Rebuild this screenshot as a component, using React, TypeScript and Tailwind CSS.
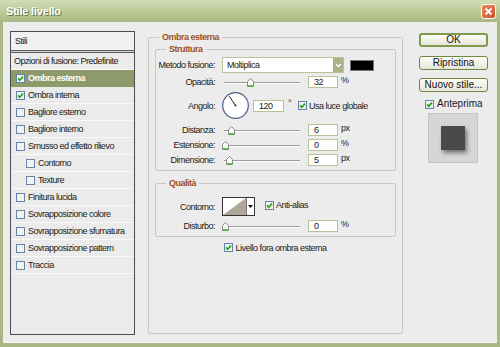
import React from "react";

const styleRows = [
  { label: "Ombra esterna", checked: true, selected: true },
  { label: "Ombra interna", checked: true },
  { label: "Bagliore esterno" },
  { label: "Bagliore interno" },
  { label: "Smusso ed effetto rilievo" },
  { label: "Contorno", indent: true },
  { label: "Texture", indent: true },
  { label: "Finitura lucida" },
  { label: "Sovrapposizione colore" },
  { label: "Sovrapposizione sfumatura" },
  { label: "Sovrapposizione pattern" },
  { label: "Traccia" },
];

const Check = ({ checked = false }: { checked?: boolean }) => (
  <svg width="9" height="9" viewBox="0 0 9 9" className="shrink-0">
    <rect x="0.5" y="0.5" width="8" height="8" fill="#f3f3ec" stroke="#6583ab" />
    {checked && (
      <path d="M2 4.4 L3.7 6.2 L7 2.6" stroke="#22a522" strokeWidth="1.7" fill="none" />
    )}
  </svg>
);

const Slider = ({ pos }: { pos: number }) => (
  <div className="relative w-[80px] h-[12px] shrink-0">
    <div className="absolute left-[2px] right-[2px] top-[6px] h-[2px] border-t border-[#9c9c9c] border-b border-b-white" />
    <svg width="7" height="9" viewBox="0 0 7 9" className="absolute top-[2px]" style={{ left: pos }}>
      <path d="M0.5 3.5 L3.5 0.5 L6.5 3.5 L6.5 8.5 L0.5 8.5 Z" fill="#fbfbf6" stroke="#8a8a80" />
      <path d="M1 8 L6 8" stroke="#3fae2e" strokeWidth="1.5" />
    </svg>
  </div>
);

const Field = ({ value, w = "w-[30px]" }: { value: string; w?: string }) => (
  <div className={`${w} h-[12px] shrink-0 bg-white border border-[#b7c49a] pl-[5px] leading-[10px] text-[9px]`}>
    {value}
  </div>
);

const Label = ({ children }: { children: React.ReactNode }) => (
  <div className="w-[60px] shrink-0 text-right pr-[1px]">{children}</div>
);

const SliderRow = ({ label, pos, value, unit }: { label: string; pos: number; value: string; unit: string }) => (
  <div className="flex items-center h-[12px]">
    <Label>{label}</Label>
    <div className="ml-[6px]">
      <Slider pos={pos} />
    </div>
    <div className="ml-[6px]">
      <Field value={value} />
    </div>
    <span className="ml-[3px] self-start leading-[9px]">{unit}</span>
  </div>
);

const Button = ({ children, main = false }: { children: React.ReactNode; main?: boolean }) => (
  <div
    className={`w-[69px] h-[14px] flex items-center justify-center rounded-[3px] bg-gradient-to-b from-[#fffff8] to-[#e6e5d8] text-[10px] tracking-normal text-[#111] ${
      main ? "border-2 border-[#7f9b4c]" : "border border-[#6d8a40]"
    }`}
  >
    {children}
  </div>
);

export default function App() {
  return (
    <div className="w-[500px] h-[347px] overflow-hidden flex flex-col bg-[#a9b785] font-['Liberation_Sans',Arial,sans-serif] text-[9px] tracking-[-0.5px] whitespace-nowrap text-[#1a1a1a] leading-[12px]">
      {/* title bar */}
      <div className="h-[22px] shrink-0 flex items-center justify-between px-[6px] bg-gradient-to-b from-[#d4ddb6] via-[#bccb98] to-[#a9b884]">
        <span className="text-white font-bold text-[11px] tracking-[-0.2px] [text-shadow:1px_1px_0_#6b7a48]">Stile livello</span>
        <div className="w-[15px] h-[15px] rounded-[3px] border border-white bg-gradient-to-br from-[#ec8a5e] to-[#cf4d24] flex items-center justify-center -mr-[2px]">
          <svg width="9" height="9" viewBox="0 0 9 9">
            <path d="M1.5 1.5 L7.5 7.5 M7.5 1.5 L1.5 7.5" stroke="white" strokeWidth="1.8" />
          </svg>
        </div>
      </div>

      {/* client */}
      <div className="flex-1 flex ml-[3px] mr-[3px] mb-[4px] bg-[#ececec] border-b border-[#f6f6f2]">
        {/* styles list */}
        <div className="ml-[7px] mt-[9px] w-[125px] h-[304px] border border-[#4c4c4c] bg-[#ebebeb] flex flex-col">
          <div className="h-[18px] flex items-center pl-[4px] bg-[#f1f1f1]">Stili</div>
          <div className="h-[3px] border-y border-[#5a5a5a] bg-[#d8d8d8]" />
          <div className="h-[17px] flex items-center pl-[3px] border-b border-[#fafafa]">Opzioni di fusione: Predefinite</div>
          {styleRows.map((r, i) => (
            <div
              key={i}
              className={`h-[17px] flex items-center gap-[3px] border-b ${
                r.selected ? "bg-[#8d9b6b] border-[#8d9b6b] text-white font-bold" : "border-[#fafafa]"
              } ${r.indent ? "pl-[15px]" : "pl-[5px]"}`}
            >
              <Check checked={r.checked} />
              <span>{r.label}</span>
            </div>
          ))}
        </div>

        {/* settings */}
        <fieldset className="ml-[13px] mt-[9px] w-[255px] h-[303px] border border-[#c9c9c0] rounded-[2px]">
          <legend className="ml-[10px] px-[3px] font-bold text-[#a0521c] leading-[12px]">Ombra esterna</legend>

          <fieldset className="mx-[6px] border border-[#c9c9c0] rounded-[2px] pt-[2px] pb-[4px]">
            <legend className="ml-[10px] px-[3px] font-bold text-[#a0521c] leading-[12px]">Struttura</legend>
            <div className="flex items-center h-[16px]">
              <Label>Metodo fusione:</Label>
              <div className="ml-[6px] w-[122px] h-[16px] flex bg-white border border-[#b7c49a]">
                <span className="flex-1 pl-[4px] leading-[14px]">Moltiplica</span>
                <div className="w-[10px] bg-[#a6b385] flex items-center justify-center">
                  <svg width="7" height="5" viewBox="0 0 7 5">
                    <path d="M1 1 L3.5 3.5 L6 1" stroke="white" strokeWidth="1.4" fill="none" />
                  </svg>
                </div>
              </div>
              <div className="ml-[6px] w-[24px] h-[11px] bg-black border border-[#777]" />
            </div>
            <div className="mt-[3px]">
              <SliderRow label="Opacità:" pos={25} value="32" unit="%" />
            </div>
            <div className="mt-[4px] flex items-center h-[27px]">
              <Label>Angolo:</Label>
              <svg width="27" height="27" viewBox="0 0 27 27" className="ml-[6px] shrink-0">
                <circle cx="13.5" cy="13.5" r="12.8" fill="white" stroke="#4f5f86" strokeWidth="1.2" />
                <path d="M13.5 13.5 L7.2 4.1" stroke="#222" strokeWidth="1" />
                <circle cx="13.5" cy="13.5" r="1" fill="#222" />
              </svg>
              <div className="ml-[4px]">
                <Field value="120" w="w-[31px]" />
              </div>
              <span className="ml-[4px] self-center -mt-[6px]">°</span>
              <div className="ml-[7px] flex items-center gap-[2px]">
                <Check checked />
                <span>Usa luce globale</span>
              </div>
            </div>
            <div className="mt-[5px]">
              <SliderRow label="Distanza:" pos={6} value="6" unit="px" />
            </div>
            <div className="mt-[3px]">
              <SliderRow label="Estensione:" pos={0} value="0" unit="%" />
            </div>
            <div className="mt-[3px]">
              <SliderRow label="Dimensione:" pos={4} value="5" unit="px" />
            </div>
          </fieldset>

          <fieldset className="mx-[6px] mt-[6px] border border-[#c9c9c0] rounded-[2px] pt-[8px] pb-[4px]">
            <legend className="ml-[10px] px-[3px] font-bold text-[#a0521c] leading-[12px]">Qualità</legend>
            <div className="flex items-center h-[19px]">
              <Label>Contorno:</Label>
              <div className="ml-[6px] w-[33px] h-[19px] flex border border-[#333] bg-white">
                <svg width="23" height="17" viewBox="0 0 23 17" className="shrink-0">
                  <path d="M0 17 L23 0 L23 17 Z" fill="#aea796" />
                </svg>
                <div className="flex-1 border-l border-[#777] flex items-center justify-center">
                  <svg width="5" height="3" viewBox="0 0 5 3">
                    <path d="M0 0 L5 0 L2.5 3 Z" fill="#111" />
                  </svg>
                </div>
              </div>
              <div className="ml-[10px] flex items-center gap-[2px] self-start mt-[2px]">
                <Check checked />
                <span>Anti-alias</span>
              </div>
            </div>
            <div className="mt-[4px]">
              <SliderRow label="Disturbo:" pos={0} value="0" unit="%" />
            </div>
          </fieldset>

          <div className="mt-[4px] h-[13px] flex items-center justify-center gap-[2px]">
            <Check checked />
            <span>Livello fora ombra esterna</span>
          </div>
        </fieldset>

        {/* buttons */}
        <div className="ml-[16px] mt-[11px] w-[69px] flex flex-col">
          <Button main>OK</Button>
          <div className="mt-[9px]">
            <Button>Ripristina</Button>
          </div>
          <div className="mt-[8px]">
            <Button>Nuovo stile...</Button>
          </div>
          <div className="mt-[6px] h-[12px] ml-[6px] flex items-center gap-[3px] text-[10px] tracking-normal">
            <Check checked />
            <span>Anteprima</span>
          </div>
          <div className="mt-[3px] ml-[9px] w-[50px] h-[50px] bg-[#d6d6d6] border border-[#c6c6c6] flex items-center justify-center">
            <div className="w-[24px] h-[24px] bg-[#4a4a4a] shadow-[2px_3px_4px_rgba(0,0,0,0.45)]" />
          </div>
        </div>
      </div>
    </div>
  );
}
